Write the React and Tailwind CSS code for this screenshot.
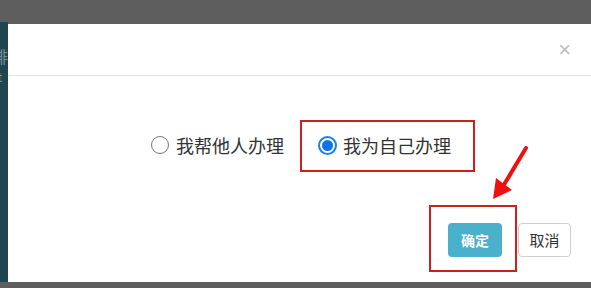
export default function App() {
  const cjk = { fontFamily: '"Noto Sans CJK SC", "Noto Sans", sans-serif' };
  return (
    <div className="relative w-[591px] h-[288px] overflow-hidden bg-[#5e5e5e]" style={cjk}>
      <div className="flex pt-[22px] h-[282px]">
        <div className="w-[8px] shrink-0 bg-[#1f4650] overflow-hidden flex flex-col text-[#7b8d92] text-[16px] leading-none pt-[26px]">
          <span className="-ml-[8px]">排</span>
          <span className="-ml-[6px] mt-[6px] text-[13px]">it</span>
        </div>
        <div className="mt-[2px] w-[586px] shrink-0 bg-white flex flex-col">
          <div className="h-[52px] border-b border-[#e5e5e5] flex items-center justify-end pr-[23px]">
            <span className="text-[#bdbdbd] text-[22px] leading-none" style={{ fontFamily: '"Liberation Sans", sans-serif' }}>×</span>
          </div>
          <div className="h-[128px] flex items-center justify-center pt-[10px]">
            <label className="flex items-center text-[18px] text-[#333] leading-none">
              <span className="w-[18px] h-[18px] rounded-full border border-[#777] bg-white"></span>
              <span className="ml-[7px]">我帮他人办理</span>
            </label>
            <label className="flex items-center text-[18px] text-[#333] leading-none ml-[34px]">
              <span className="w-[19px] h-[19px] rounded-full border-[2px] border-[#1e7fe8] bg-white flex items-center justify-center">
                <span className="w-[11px] h-[11px] rounded-full bg-[#0b73ee]"></span>
              </span>
              <span className="ml-[6px]">我为自己办理</span>
            </label>
          </div>
          <div className="flex justify-end items-start pr-[23px] pt-[19px] gap-[16px]">
            <button className="w-[54px] h-[34px] rounded-[4px] bg-[#4bb0cc] text-white text-[14px] font-bold">确定</button>
            <button className="w-[53px] h-[34px] rounded-[4px] bg-white border border-[#cfcfcf] text-[#333] text-[15px]">取消</button>
          </div>
        </div>
      </div>
      <div className="absolute left-[300px] top-[120px] w-[175px] h-[52px] border-2 border-[#d01f1f]"></div>
      <div className="absolute left-[429px] top-[205px] w-[88px] h-[67px] border-2 border-[#d01f1f]"></div>
      <svg className="absolute left-[488px] top-[144px]" width="46" height="60" viewBox="0 0 46 60">
        <path d="M38 4 L14 44" stroke="#f01010" strokeWidth="4" strokeLinecap="round" />
        <path d="M5 55 L8 34 L24 46 Z" fill="#f01010" />
      </svg>
    </div>
  );
}
